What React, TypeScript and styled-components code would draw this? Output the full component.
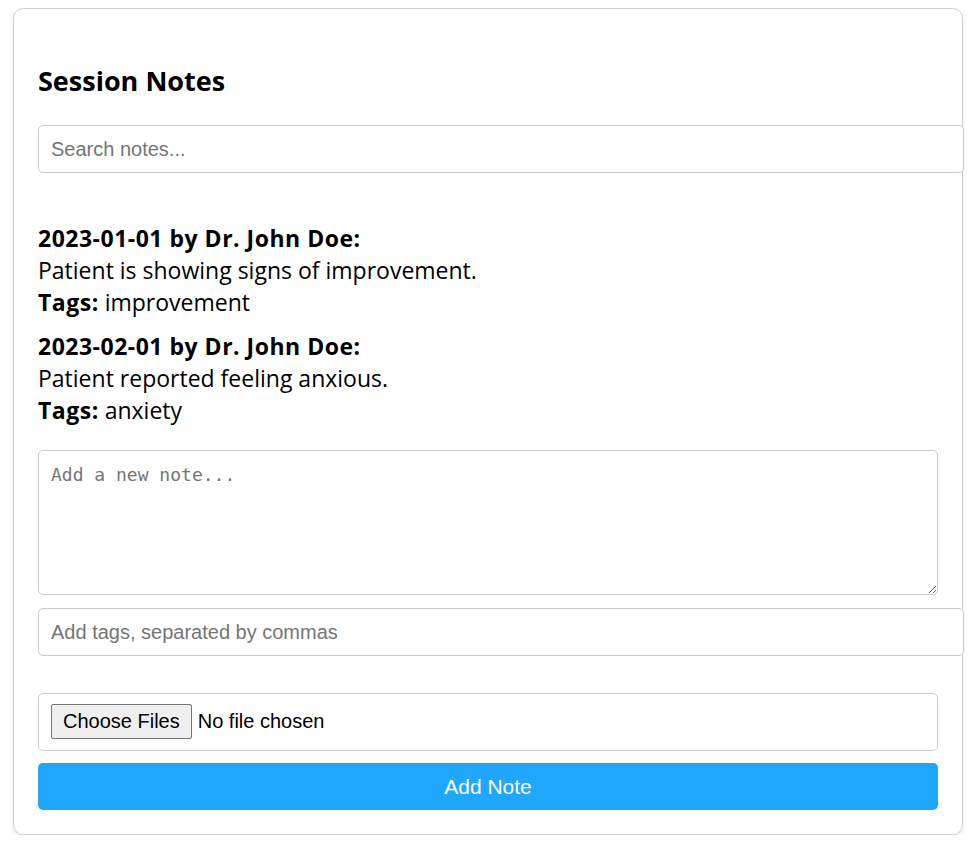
import { useState } from "react";
import styled, { createGlobalStyle } from "styled-components";

type Note = {
  date: string;
  author: string;
  text: string;
  tags: string[];
};

const initialNotes: Note[] = [
  {
    date: "2023-01-01",
    author: "Dr. John Doe",
    text: "Patient is showing signs of improvement.",
    tags: ["improvement"],
  },
  {
    date: "2023-02-01",
    author: "Dr. John Doe",
    text: "Patient reported feeling anxious.",
    tags: ["anxiety"],
  },
];

function App() {
  const [notes] = useState<Note[]>(initialNotes);
  const [search, setSearch] = useState("");

  const visible = notes.filter((n) =>
    n.text.toLowerCase().includes(search.toLowerCase())
  );

  return (
    <>
      <GlobalStyle />
      <Card>
        <Heading>Session Notes</Heading>
        <TextInput
          type="text"
          placeholder="Search notes..."
          value={search}
          onChange={(e) => setSearch(e.target.value)}
        />
        <NoteList>
          {visible.map((note, idx) => (
            <NoteItem key={idx}>
              <strong>
                {note.date} by {note.author}:
              </strong>
              <NoteLine>{note.text}</NoteLine>
              <NoteLine>
                <strong>Tags:</strong> {note.tags.join(", ")}
              </NoteLine>
            </NoteItem>
          ))}
        </NoteList>
        <NoteArea placeholder="Add a new note..." />
        <TextInput type="text" placeholder="Add tags, separated by commas" />
        <FileBox>
          <FileInput type="file" multiple />
        </FileBox>
        <AddButton>Add Note</AddButton>
      </Card>
    </>
  );
}

export default App;

const GlobalStyle = createGlobalStyle`
  body {
    margin: 8px;
    background: #ffffff;
    font-family: "Open Sans", "Noto Sans", sans-serif;
  }
`;

const Card = styled.div`
  display: flex;
  flex-direction: column;
  align-items: flex-start;
  margin: 0 9px 0 5px;
  padding: 24px;
  border: 1px solid #cfcfcf;
  border-radius: 10px;
  box-shadow: 0 2px 6px rgba(0, 0, 0, 0.08);
  background: #fff;
`;

const Heading = styled.h2`
  margin: 32px 0 28px;
  font-family: "Open Sans", "Noto Sans", sans-serif;
  font-size: 27px;
  font-weight: 700;
  color: #000;
  line-height: 32px;
`;

const TextInput = styled.input`
  box-sizing: content-box;
  width: 100%;
  padding: 12px;
  margin: 0;
  border: 1px solid #cccccc;
  border-radius: 5px;
  font-family: "Liberation Sans", Arial, sans-serif;
  font-size: 20px;
  line-height: 22px;
  height: 22px;
  color: #000;

  &::placeholder {
    color: #757575;
  }
`;

const NoteList = styled.div`
  display: flex;
  flex-direction: column;
  gap: 12px;
  margin: 49px 0 24px;
`;

const NoteItem = styled.div`
  display: flex;
  flex-direction: column;
  font-family: "Open Sans", "Noto Sans", sans-serif;
  font-size: 23px;
  line-height: 32px;
  color: #000;

  strong {
    font-weight: 700;
    letter-spacing: 0.5px;
  }
`;

const NoteLine = styled.div``;

const NoteArea = styled.textarea`
  box-sizing: border-box;
  width: 100%;
  height: 145px;
  padding: 12px;
  margin: 0 0 13px;
  border: 1px solid #cccccc;
  border-radius: 5px;
  font-family: "DejaVu Sans Mono", monospace;
  font-size: 18px;
  line-height: 24px;

  &::placeholder {
    color: #757575;
  }
`;

const FileBox = styled.div`
  box-sizing: border-box;
  width: 100%;
  margin-top: 37px;
  padding: 10px 12px 11px;
  border: 1px solid #cccccc;
  border-radius: 5px;
`;

const FileInput = styled.input`
  font-family: "Liberation Sans", Arial, sans-serif;
  font-size: 20px;
  color: #000;

  &::file-selector-button {
    padding: 5px 11px;
    margin-right: 6px;
    font: inherit;
    background: #efefef;
    border: 1px solid #767676;
    border-radius: 2px;
    color: #000;
  }
`;

const AddButton = styled.button`
  width: 100%;
  height: 47px;
  margin-top: 12px;
  border: none;
  border-radius: 5px;
  background: #1ea7fd;
  color: #fff;
  font-family: "Liberation Sans", Arial, sans-serif;
  font-size: 21px;
  cursor: pointer;
`;
